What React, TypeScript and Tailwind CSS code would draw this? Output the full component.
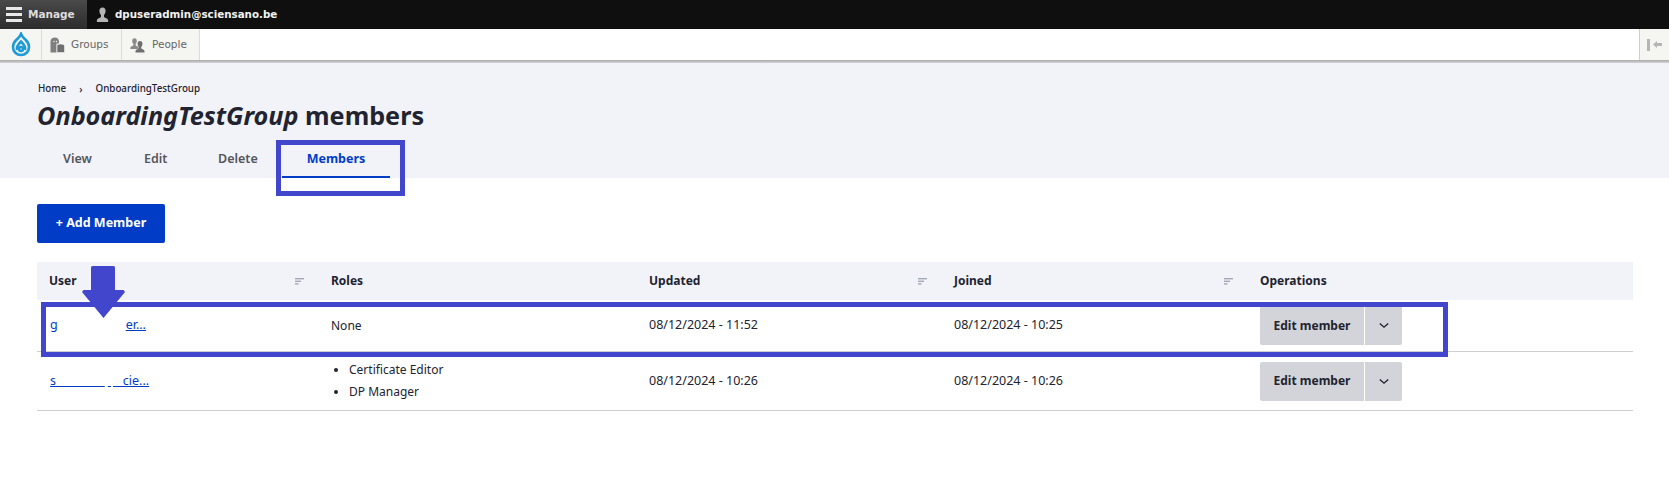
import React from "react";

const font = { fontFamily: '"Noto Sans", "Open Sans", sans-serif' };
const gridCols = "grid grid-cols-[282px_318px_305px_306px_1fr]";

function Person({ className }: { className?: string }) {
  return (
    <svg viewBox="0 0 16 16" className={className} fill="currentColor">
      <path d="M8 0.5c-2.200 0-3.300 1.600-3.300 3.700 0 1.800.8 3.400 1.700 4.300v1.600c0 .8-.9 1.200-2.400 1.800C2.600 12.500 2 13.200 2 14.500V16h12v-1.500c0-1.300-.6-2-2-2.600-1.500-.6-2.400-1-2.400-1.800V8.500c.9-.9 1.700-2.500 1.700-4.300C11.300 2.100 10.200 0.500 8 0.500z" />
    </svg>
  );
}

function SortIcon() {
  return (
    <svg viewBox="0 0 9 7" className="w-[9px] h-[7px]" fill="#a5a7b4">
      <rect x="0" y="0" width="9" height="1.400" />
      <rect x="0" y="2.600" width="6" height="1.400" />
      <rect x="0" y="5.200" width="3.500" height="1.400" />
    </svg>
  );
}

function OpButton() {
  return (
    <div className="flex h-[39px] w-[142px] rounded-[2px] overflow-hidden text-[#222330] text-[12px] font-bold">
      <div className="w-[104px] bg-[#d3d4d9] flex items-center justify-center">Edit member</div>
      <div className="w-[37px] ml-[1px] bg-[#d3d4d9] flex items-center justify-center">
        <svg viewBox="0 0 12 8" className="w-[10px] h-[7px]" fill="none" stroke="#222330" strokeWidth="1.700">
          <path d="M1 1.500l5 4.500 5-4.500" />
        </svg>
      </div>
    </div>
  );
}

function HeaderCell({ label, sort }: { label: string; sort?: boolean }) {
  return (
    <div className="flex items-center justify-between pl-3 pr-[15px] text-[12px] font-bold text-[#222330]">
      <span>{label}</span>
      {sort && <SortIcon />}
    </div>
  );
}

export default function App() {
  return (
    <div className="relative w-[1669px] h-[479px] bg-white overflow-hidden" style={font}>
      {/* Admin toolbar */}
      <div
        className="flex h-[29px] bg-[#0f0f0f] text-white text-[10.300px] font-bold"
        style={{ fontFamily: '"DejaVu Sans", sans-serif' }}
      >
        <div className="w-[87px] flex items-center gap-[6px] pl-[6px] bg-gradient-to-b from-[#4a4a4a] to-[#2c2c2c]">
          <div className="flex flex-col gap-[3px] w-[16px]">
            <span className="block h-[3px] bg-[#e8e8e8]" />
            <span className="block h-[3px] bg-[#e8e8e8]" />
            <span className="block h-[3px] bg-[#e8e8e8]" />
          </div>
          <span className="text-[#dddddd] text-[10.500px]">Manage</span>
        </div>
        <div className="flex items-center gap-[5px] pl-[8px]">
          <Person className="w-[15px] h-[15px] text-[#b5b5b5]" />
          <span className="text-[#f2f2f2]">dpuseradmin@sciensano.be</span>
        </div>
      </div>

      {/* Secondary toolbar */}
      <div className="flex h-[31px] bg-white text-[10.500px] text-[#666666]" style={{ fontFamily: '"DejaVu Sans", sans-serif' }}>
        <div className="w-[42px] bg-[#f5f5f2] border-r border-[#dcdcdc] flex items-center justify-center">
          <svg viewBox="0 0 20 25" className="w-[20px] h-[25px]" fill="none" stroke="#1e9ad6" strokeWidth="2.600">
            <path d="M10 2c1 2.800 3 4.200 4.800 6C16.800 10 18 12.500 18 15c0 4.800-3.600 8-8 8s-8-3.200-8-8c0-2.500 1.200-5 3.200-7C7 6.200 9 4.800 10 2z" />
            <path d="M6 18c-1-3 .8-5.200 4-8.500 3.200 3.300 5 5.500 4 8.500" />
            <circle cx="10" cy="17" r="2" />
          </svg>
        </div>
        <div className="w-[80px] bg-[#f5f5f2] border-r border-[#dcdcdc] flex items-center pl-[8px] gap-[6px]">
          <svg viewBox="0 0 15 16" className="w-[15px] h-[16px]">
            <path d="M0.500 15.500V4.500C0.500 2 2.500 0.500 4.800 0.500S9 2 9 4.500v2H6.500v9z" fill="#7f7f7f" />
            <circle cx="4" cy="4.500" r=".7" fill="#f5f5f2" />
            <circle cx="6.500" cy="4.500" r=".7" fill="#f5f5f2" />
            <path d="M7 15.500V9c0-1.300 1-2 3.500-2S14.500 7.700 14.500 9v6.500z" fill="#6f6f6f" stroke="#f5f5f2" strokeWidth=".6" />
          </svg>
          <span>Groups</span>
        </div>
        <div className="w-[78px] bg-[#f5f5f2] border-r border-[#dcdcdc] flex items-center pl-[7px]">
          <div className="flex -space-x-[6px] items-end">
            <Person className="w-[11px] h-[13px] text-[#8a8a8a] mb-[3px]" />
            <Person className="w-[12px] h-[13px] text-[#6f6f6f]" />
          </div>
          <span className="ml-[6px]">People</span>
        </div>
        <div className="flex-1" />
        <div className="w-[30px] bg-[#f5f5f2] border-l border-[#cfcfcf] flex items-center pl-[7px] gap-[3px]">
          <span className="block w-[3px] h-[12px] bg-[#b5b5b5]" />
          <svg viewBox="0 0 9 7" className="w-[9px] h-[7px]" fill="#b5b5b5">
            <path d="M0 3.500L4 0v2h5v3H4v2z" />
          </svg>
        </div>
      </div>
      <div className="h-[3px] bg-gradient-to-b from-[#a9a9a9] to-[#d5d5da]" />

      {/* Page header */}
      <div className="h-[115px] bg-[#f2f3f8] pl-[38px] text-[#222330]">
        <div className="flex items-center pt-[18px] text-[9.800px] font-medium leading-[16px]">
          <span>Home</span>
          <span className="ml-[13px] mr-[13px] text-[10px]">›</span>
          <span>OnboardingTestGroup</span>
        </div>
        <h1 className="-ml-[1px] text-[25.200px] font-bold leading-[34px] mt-[1px]">
          <em>OnboardingTestGroup</em> members
        </h1>
        <div className="-ml-[1px] flex mt-[9px] text-[12.500px] font-semibold text-[#55565b] h-[37px] leading-[36px]">
          <div className="w-[107px] pl-[26px]">View</div>
          <div className="w-[74px]">Edit</div>
          <div className="w-[64px]">Delete</div>
          <div className="w-[108px] text-center font-bold text-[#003cc5] border-b-2 border-[#003cc5]">Members</div>
        </div>
      </div>

      {/* Content */}
      <div className="pl-[37px] pr-[36px]">
        <button className="block mt-[26px] w-[128px] h-[39px] rounded-[2px] bg-[#003cc5] text-white text-[12.500px] font-bold">
          + Add Member
        </button>

        <div className="mt-[19px] text-[12.500px] text-[#222330]">
          <div className={`${gridCols} h-[38px] bg-[#f2f3f8]`}>
            <HeaderCell label="User" sort />
            <HeaderCell label="Roles" />
            <HeaderCell label="Updated" sort />
            <HeaderCell label="Joined" sort />
            <HeaderCell label="Operations" />
          </div>

          <div className={`${gridCols} h-[52px] border-b border-[#cfcfcf] items-center`}>
            <div className="pl-[13px] text-[#003cc5] flex">
              <span className="underline">g</span>
              <span className="w-[68px]" />
              <span className="underline">er...</span>
            </div>
            <div className="pl-3 text-[12px]">None</div>
            <div className="pl-3">08/12/2024 - 11:52</div>
            <div className="pl-3">08/12/2024 - 10:25</div>
            <div className="pl-3">
              <OpButton />
            </div>
          </div>

          <div className={`${gridCols} h-[59px] border-b border-[#cfcfcf] items-center`}>
            <div className="pl-[13px] text-[#003cc5] flex whitespace-pre">
              <span className="underline">{"s               "}</span>
              <span className="underline ml-[3px]">{" "}</span>
              <span className="underline ml-[2px]">{"   cie..."}</span>
            </div>
            <div className="pl-3 text-[12px]">
              <ul className="list-disc pl-[18px] leading-[22px]">
                <li>Certificate Editor</li>
                <li>DP Manager</li>
              </ul>
            </div>
            <div className="pl-3">08/12/2024 - 10:26</div>
            <div className="pl-3">08/12/2024 - 10:26</div>
            <div className="pl-3">
              <OpButton />
            </div>
          </div>
        </div>
      </div>

      {/* Annotations */}
      <div className="absolute left-[276px] top-[140px] w-[129px] h-[56px] border-[5px] border-[#4146cc]" />
      <div className="absolute left-[41px] top-[302px] w-[1407px] h-[55px] border-[5px] border-[#4146cc]" />
      <svg className="absolute left-[82px] top-[266px]" width="43" height="52" viewBox="0 0 43 52" fill="#4146cc">
        <path d="M9 1.500A1.500 1.500 0 0 1 10.500 0h21A1.500 1.500 0 0 1 33 1.500V24h8.500l1.500 2L21.500 52 0 26l1.500-2H9z" />
      </svg>
    </div>
  );
}
